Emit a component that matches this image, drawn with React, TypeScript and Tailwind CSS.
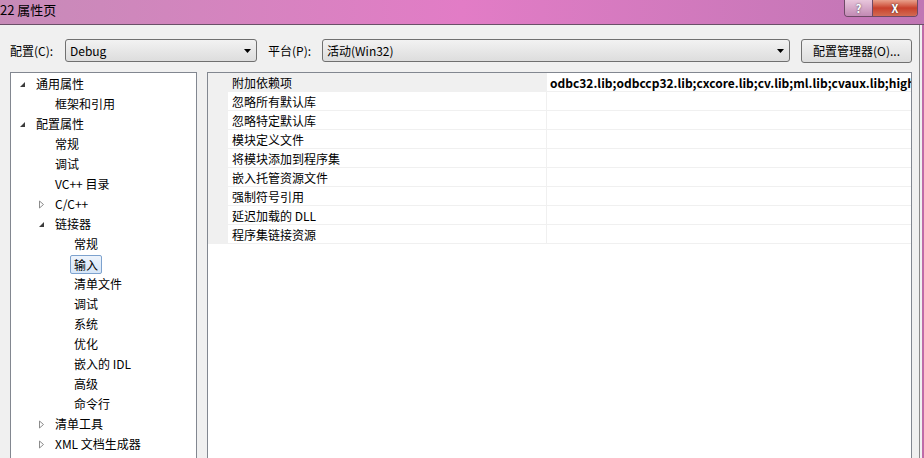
import React from 'react';

const font = { fontFamily: '"Noto Sans CJK SC", "Noto Sans", sans-serif' };

type Node = { label: string; level: number; arrow?: 'open' | 'closed'; selected?: boolean };

const tree: Node[] = [
  { label: '通用属性', level: 0, arrow: 'open' },
  { label: '框架和引用', level: 1 },
  { label: '配置属性', level: 0, arrow: 'open' },
  { label: '常规', level: 1 },
  { label: '调试', level: 1 },
  { label: 'VC++ 目录', level: 1 },
  { label: 'C/C++', level: 1, arrow: 'closed' },
  { label: '链接器', level: 1, arrow: 'open' },
  { label: '常规', level: 2 },
  { label: '输入', level: 2, selected: true },
  { label: '清单文件', level: 2 },
  { label: '调试', level: 2 },
  { label: '系统', level: 2 },
  { label: '优化', level: 2 },
  { label: '嵌入的 IDL', level: 2 },
  { label: '高级', level: 2 },
  { label: '命令行', level: 2 },
  { label: '清单工具', level: 1, arrow: 'closed' },
  { label: 'XML 文档生成器', level: 1, arrow: 'closed' },
  { label: '浏览信息', level: 1, arrow: 'closed' },
];

const props = [
  { name: '附加依赖项', value: 'odbc32.lib;odbccp32.lib;cxcore.lib;cv.lib;ml.lib;cvaux.lib;highgui.lib;%(AdditionalDependencies)' },
  { name: '忽略所有默认库', value: '' },
  { name: '忽略特定默认库', value: '' },
  { name: '模块定义文件', value: '' },
  { name: '将模块添加到程序集', value: '' },
  { name: '嵌入托管资源文件', value: '' },
  { name: '强制符号引用', value: '' },
  { name: '延迟加载的 DLL', value: '' },
  { name: '程序集链接资源', value: '' },
];

const indent = ['w-[7px]', 'w-[26px]', 'w-[45px]'];

function Arrow({ kind }: { kind?: 'open' | 'closed' }) {
  if (kind === 'open')
    return (
      <svg width="9" height="9" viewBox="0 0 9 9" className="mr-[9px]">
        <path d="M7 2 L7 7 L2 7 Z" fill="#3c3c3c" />
      </svg>
    );
  if (kind === 'closed')
    return (
      <svg width="9" height="9" viewBox="0 0 9 9" className="mr-[9px]">
        <path d="M2.5 1 L6.5 4.5 L2.5 8 Z" fill="#fff" stroke="#8c8c8c" strokeWidth="1" />
      </svg>
    );
  return <span className="w-[18px]" />;
}

function Combo({ text, className }: { text: string; className: string }) {
  return (
    <div
      className={`h-[23px] flex items-center justify-between pl-[4px] pr-[5px] rounded-[3px] border border-[#707070] bg-gradient-to-b from-[#f2f2f2] to-[#dddddd] ${className}`}
    >
      <span className="text-[12px] text-black">{text}</span>
      <svg width="7" height="4" viewBox="0 0 7 4">
        <path d="M0 0 L7 0 L3.5 4 Z" fill="#000" />
      </svg>
    </div>
  );
}

export default function App() {
  return (
    <div className="w-[924px] h-[458px] overflow-hidden flex flex-col bg-[#f0f0f0]" style={font}>
      {/* title bar */}
      <div className="h-[24px] shrink-0 flex items-start justify-between bg-gradient-to-r from-[#c78bb8] via-[#e27cc6] to-[#c076b4]">
        <span className="text-[13px] leading-[20px] text-black pl-0">22 属性页</span>
        <div className="flex mr-[6px] rounded-b-[4px] overflow-hidden border border-t-0 border-[#6e4a66]">
          <div className="w-[28px] h-[16px] flex items-center justify-center bg-gradient-to-b from-[#e8c6dc] to-[#c28ab4] border-r border-[#6e4a66]">
            <span className="text-[11px] font-bold text-white leading-none" style={{ textShadow: '0 0 2px #444' }}>?</span>
          </div>
          <div className="w-[44px] h-[16px] flex items-center justify-center bg-gradient-to-b from-[#e8a08c] via-[#c8402c] to-[#d26a52]">
            <span className="text-[11px] font-bold text-white leading-none" style={{ textShadow: '0 0 2px #333' }}>X</span>
          </div>
        </div>
      </div>

      <div className="flex-1 flex border-t border-[#6a5068] min-h-0">
        <div className="flex-1 flex flex-col min-w-0">
          {/* toolbar */}
          <div className="h-[47px] shrink-0 flex items-center pl-[10px] pt-[4px] text-[12px] text-black">
            <span className="w-[55px]">配置(C):</span>
            <Combo text="Debug" className="w-[192px]" />
            <span className="ml-[11px] w-[54px]">平台(P):</span>
            <Combo text="活动(Win32)" className="w-[468px]" />
            <div className="ml-[11px] w-[111px] h-[24px] flex items-center justify-center rounded-[3px] border border-[#707070] bg-gradient-to-b from-[#f2f2f2] to-[#dddddd]">
              配置管理器(O)...
            </div>
          </div>

          {/* panels */}
          <div className="flex-1 flex pl-[10px] min-h-0">
            <div className="w-[187px] shrink-0 bg-white border border-[#828790] border-b-0 pt-[1px] overflow-hidden">
              {tree.map((n, i) => (
                <div key={i} className="h-[20px] flex items-center text-[12px] text-black">
                  <span className={`${indent[n.level]} shrink-0`} />
                  <Arrow kind={n.arrow} />
                  <span
                    className={
                      n.selected
                        ? 'px-[3px] -ml-[4px] h-[19px] leading-[17px] rounded-[2px] border border-[#7da2ce] bg-gradient-to-b from-[#eef4fc] to-[#d6e6f8]'
                        : 'whitespace-nowrap'
                    }
                  >
                    {n.label}
                  </span>
                </div>
              ))}
            </div>

            <div className="ml-[10px] w-[705px] shrink-0 bg-white border border-[#828790] border-b-0 overflow-hidden">
              {props.map((p, i) => (
                <div key={i} className="h-[19px] flex text-[12px] text-black">
                  <div className="w-[20px] shrink-0 bg-[#f0f0f0]" />
                  <div
                    className={`w-[319px] shrink-0 pl-[4px] leading-[19px] border-b border-r border-[#f0f0f0] ${
                      i === 0 ? 'bg-[#f0f0f0]' : 'bg-white'
                    }`}
                  >
                    {p.name}
                  </div>
                  <div className="flex-1 min-w-0 pl-[3px] leading-[19px] font-bold whitespace-nowrap overflow-hidden border-b border-[#f0f0f0]">
                    {p.value}
                  </div>
                </div>
              ))}
            </div>
          </div>
        </div>
        <div className="w-[3px] shrink-0 bg-[#f0f0f0] border-l border-[#8a8a8a]" />
        <div className="w-[2px] shrink-0 bg-[#c06aa8]" />
      </div>
    </div>
  );
}
